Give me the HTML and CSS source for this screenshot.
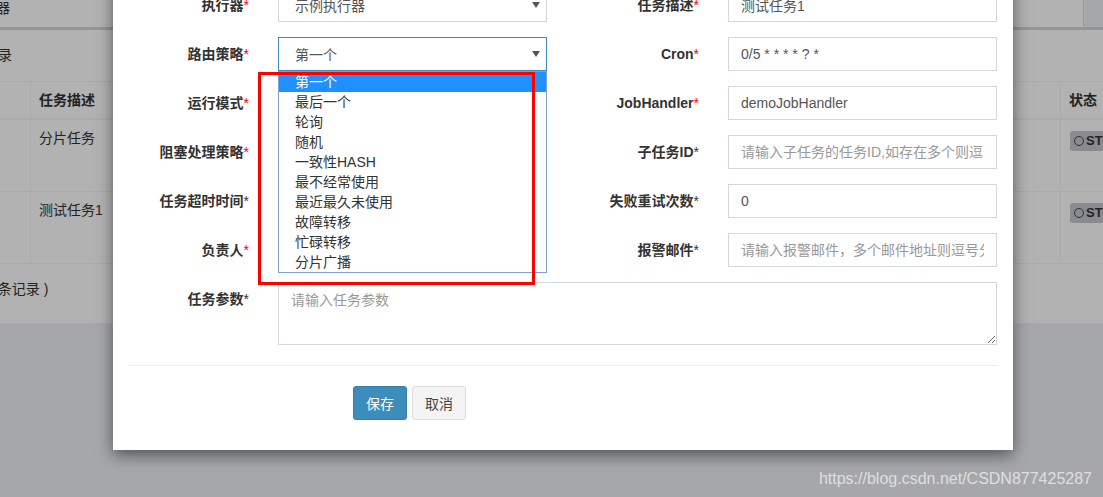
FILE: index.html
```html
<!DOCTYPE html>
<html lang="zh-CN">
  <head>
    <meta charset="UTF-8" />
    <meta name="viewport" content="width=device-width, initial-scale=1.0" />
    <title>任务管理</title>
    <link rel="stylesheet" href="styles.css">
  </head>
  <body>
    <div id="page">
      <div id="topBar">
        <div class="top-box"><span class="top-text">执行器</span></div>
      </div>
      <div id="box">
        <div class="box-head"><span>全部记录</span></div>
        <table class="job-table">
          <tr>
            <th class="c-id">ID</th>
            <th class="c-desc">任务描述</th>
            <th class="c-mid">运行模式</th>
            <th class="c-state">状态</th>
          </tr>
          <tr>
            <td class="c-id">1</td>
            <td class="c-desc">分片任务</td>
            <td class="c-mid"></td>
            <td class="c-state"><span class="badge"><i class="clock"></i>STOP</span></td>
          </tr>
          <tr>
            <td class="c-id">2</td>
            <td class="c-desc">测试任务1</td>
            <td class="c-mid"></td>
            <td class="c-state"><span class="badge"><i class="clock"></i>STOP</span></td>
          </tr>
        </table>
        <div class="box-foot"><span>共2条记录 )</span></div>
      </div>
    </div>

    <div id="backdrop"></div>

    <div id="modal">
      <form class="job-form">
        <div class="form-row">
          <label class="lbl">执行器<em>*</em></label>
          <div class="select"><span>示例执行器</span><i class="caret"></i></div>
          <label class="lbl">任务描述<em>*</em></label>
          <input class="field" type="text" value="测试任务1">
        </div>
        <div class="form-row">
          <label class="lbl">路由策略<em>*</em></label>
          <div class="select focus">
            <span>第一个</span><i class="caret"></i>
            <ul class="options">
              <li class="on">第一个</li>
              <li>最后一个</li>
              <li>轮询</li>
              <li>随机</li>
              <li>一致性HASH</li>
              <li>最不经常使用</li>
              <li>最近最久未使用</li>
              <li>故障转移</li>
              <li>忙碌转移</li>
              <li>分片广播</li>
            </ul>
            <div class="mark"></div>
          </div>
          <label class="lbl">Cron<em>*</em></label>
          <input class="field" type="text" value="0/5 * * * * ? *">
        </div>
        <div class="form-row">
          <label class="lbl">运行模式<em>*</em></label>
          <div class="select"><span>BEAN模式</span><i class="caret"></i></div>
          <label class="lbl">JobHandler<em>*</em></label>
          <input class="field" type="text" value="demoJobHandler">
        </div>
        <div class="form-row">
          <label class="lbl">阻塞处理策略<em>*</em></label>
          <div class="select"><span>单机串行</span><i class="caret"></i></div>
          <label class="lbl">子任务ID<b>*</b></label>
          <input class="field" type="text" placeholder="请输入子任务的任务ID,如存在多个则逗号分隔">
        </div>
        <div class="form-row">
          <label class="lbl">任务超时时间<b>*</b></label>
          <input class="field" type="text" value="0">
          <label class="lbl">失败重试次数<b>*</b></label>
          <input class="field" type="text" value="0">
        </div>
        <div class="form-row">
          <label class="lbl">负责人<em>*</em></label>
          <input class="field" type="text" value="XXL">
          <label class="lbl">报警邮件<b>*</b></label>
          <input class="field" type="text" placeholder="请输入报警邮件，多个邮件地址则逗号分隔">
        </div>
        <div class="form-row wide">
          <label class="lbl">任务参数<b>*</b></label>
          <textarea class="area" placeholder="请输入任务参数"></textarea>
        </div>
        <hr class="divider">
        <div class="actions">
          <button type="button" class="btn primary">保存</button>
          <button type="button" class="btn">取消</button>
        </div>
      </form>
    </div>

    <div id="watermark">https://blog.csdn.net/CSDN877425287</div>
  </body>
</html>
```

FILE: styles.css
```css
* {
  margin: 0;
  padding: 0;
  box-sizing: border-box;
}
html,
body {
  width: 1103px;
  height: 497px;
  overflow: hidden;
}
body {
  position: relative;
  background-color: #ecf0f5;
  font-family: "Liberation Sans", "Noto Sans CJK SC", sans-serif;
  font-size: 14px;
  color: #333;
}
ul {
  list-style: none;
}

/* page behind the dialog */
#topBar {
  height: 30px;
  border-bottom: 3px solid #d2d6de;
  background-color: #ecf0f5;
}
.top-box {
  width: 1084px;
  height: 27px;
  background-color: #fff;
  border-right: 1px solid #ddd;
}
.top-text {
  display: inline-block;
  margin-left: -32px;
  line-height: 17px;
}
#box {
  background-color: #fff;
  height: 293px;
}
.box-head {
  height: 51px;
  line-height: 50px;
}
.box-head span,
.box-foot span {
  display: inline-block;
  margin-left: -44px;
}
.box-foot span {
  margin-left: -24px;
}
.job-table {
  border-collapse: collapse;
  width: 1200px;
  margin-left: -50px;
}
.job-table th,
.job-table td {
  border: 1px solid #f4f4f4;
  padding: 8px;
  text-align: left;
  vertical-align: top;
  line-height: 20px;
}
.job-table th {
  height: 37px;
  border-bottom-width: 2px;
}
.job-table td {
  height: 72px;
}
.c-id {
  width: 80px;
}
.c-desc {
  width: 220px;
}
.c-state {
  width: 89px;
  white-space: nowrap;
}
.badge {
  display: inline-flex;
  align-items: center;
  margin-top: 3px;
  margin-left: 1px;
  padding: 0 5px 0 4px;
  height: 20px;
  border-radius: 3px;
  background-color: #c4c8d0;
  color: #333;
  font-size: 13px;
  font-weight: bold;
}
.clock {
  display: inline-block;
  width: 10px;
  height: 10px;
  margin-right: 2px;
  border: 1.5px solid #444;
  border-radius: 50%;
}
.box-foot {
  height: 59px;
  line-height: 50px;
}

#backdrop {
  position: absolute;
  inset: 0;
  background-color: rgba(0, 0, 0, 0.3);
}

/* dialog */
#modal {
  position: absolute;
  left: 113px;
  top: -27px;
  width: 900px;
  padding: 15px 15px 30px;
  background-color: #fff;
  box-shadow: 0 5px 15px rgba(0, 0, 0, 0.5);
}
.form-row {
  display: grid;
  grid-template-columns: 150px 269px 181px 269px;
  height: 34px;
  margin-bottom: 15px;
}
.form-row.wide {
  grid-template-columns: 150px 719px;
  height: 63px;
  margin-bottom: 0;
}
.lbl {
  padding-right: 29px;
  text-align: right;
  line-height: 34px;
  font-weight: bold;
  color: #333;
  white-space: nowrap;
}
.lbl em {
  font-style: normal;
  font-weight: normal;
  color: #f00;
}
.lbl b {
  font-weight: normal;
}
.field,
.select,
.area {
  height: 34px;
  border: 1px solid #d2d6de;
  font-family: "Liberation Sans", "Noto Sans CJK SC", sans-serif;
  font-size: 14px;
  color: #555;
  outline: none;
}
.field {
  padding: 6px 12px;
  width: 100%;
}
.field::placeholder,
.area::placeholder {
  color: #999;
}
.select {
  position: relative;
  display: flex;
  align-items: center;
  justify-content: space-between;
  padding: 0 6px 0 16px;
}
.select.focus {
  border-color: #3c8dbc;
}
.caret {
  width: 0;
  height: 0;
  border-left: 4px solid transparent;
  border-right: 4px solid transparent;
  border-top: 6px solid #555;
}
.options {
  position: absolute;
  top: 33px;
  left: -1px;
  right: -1px;
  border: 1px solid #7f9fd6;
  background-color: #fff;
  z-index: 2;
}
.options li {
  height: 20px;
  line-height: 20px;
  padding-left: 16px;
  color: #333;
}
.options li.on {
  background-color: #1e90ff;
  color: #fff;
}
.mark {
  position: absolute;
  left: -21px;
  top: 34px;
  width: 277px;
  height: 213px;
  border: 3px solid #f00;
  z-index: 3;
}
.area {
  height: 63px;
  padding: 6px 12px;
  resize: vertical;
}
.divider {
  border: 0;
  border-top: 1px solid #eee;
  margin: 20px 0;
}
.actions {
  display: flex;
  gap: 5px;
  padding-left: 225px;
}
.btn {
  height: 34px;
  padding: 0 12px;
  border: 1px solid #ddd;
  border-radius: 3px;
  background-color: #f4f4f4;
  color: #444;
  font-family: "Liberation Sans", "Noto Sans CJK SC", sans-serif;
  font-size: 14px;
}
.btn.primary {
  background-color: #3c8dbc;
  border-color: #367fa9;
  color: #fff;
}

#watermark {
  position: absolute;
  right: 11px;
  bottom: 9px;
  font-size: 16px;
  color: rgba(255, 255, 255, 0.65);
}
```
